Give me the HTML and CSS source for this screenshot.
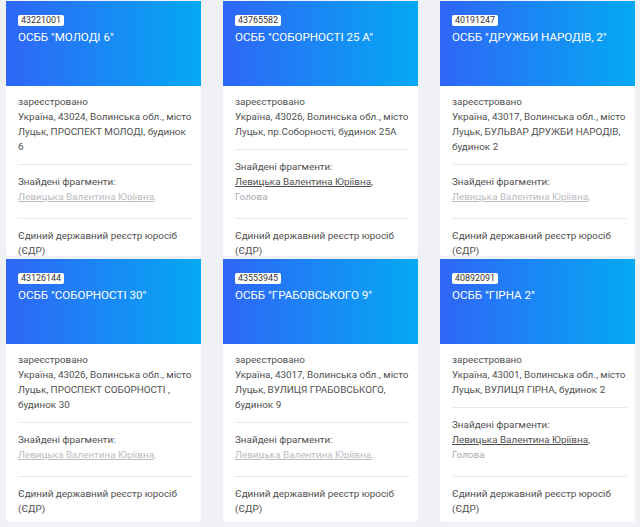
FILE: index.html
```html
<!DOCTYPE html>
<html>
  <head>
    <meta charset="utf-8">
    <title>ОСББ</title>
    <link rel="stylesheet" href="styles.css">
  </head>
  <body>
    <div class="results">
      <div class="card card-top">
        <div class="card-head">
          <span class="code">43221001</span>
          <div class="title">ОСББ "МОЛОДІ 6"</div>
        </div>
        <div class="section">
          <div>зареєстровано</div>
          <div>Україна, 43024, Волинська обл., місто Луцьк, ПРОСПЕКТ МОЛОДІ, будинок 6</div>
        </div>
        <div class="section fragments">
          <div>Знайдені фрагменти:</div>
          <div><a class="person dim">Левицька Валентина Юріївна</a><span class="dim">,</span></div>
        </div>
        <div class="section source">Єдиний державний реєстр юросіб (ЄДР)</div>
      </div>

      <div class="card card-top">
        <div class="card-head">
          <span class="code">43765582</span>
          <div class="title">ОСББ "СОБОРНОСТІ 25 А"</div>
        </div>
        <div class="section">
          <div>зареєстровано</div>
          <div>Україна, 43026, Волинська обл., місто Луцьк, пр.Соборності, будинок 25А</div>
        </div>
        <div class="section fragments">
          <div>Знайдені фрагменти:</div>
          <div><a class="person">Левицька Валентина Юріївна</a>,</div>
          <div class="role">Голова</div>
        </div>
        <div class="section source">Єдиний державний реєстр юросіб (ЄДР)</div>
      </div>

      <div class="card card-top">
        <div class="card-head">
          <span class="code">40191247</span>
          <div class="title">ОСББ "ДРУЖБИ НАРОДІВ, 2"</div>
        </div>
        <div class="section">
          <div>зареєстровано</div>
          <div>Україна, 43017, Волинська обл., місто Луцьк, БУЛЬВАР ДРУЖБИ НАРОДІВ, будинок 2</div>
        </div>
        <div class="section fragments">
          <div>Знайдені фрагменти:</div>
          <div><a class="person dim">Левицька Валентина Юріївна</a><span class="dim">,</span></div>
        </div>
        <div class="section source">Єдиний державний реєстр юросіб (ЄДР)</div>
      </div>

      <div class="card">
        <div class="card-head">
          <span class="code">43126144</span>
          <div class="title">ОСББ "СОБОРНОСТІ 30"</div>
        </div>
        <div class="section">
          <div>зареєстровано</div>
          <div>Україна, 43026, Волинська обл., місто Луцьк, ПРОСПЕКТ СОБОРНОСТІ , будинок 30</div>
        </div>
        <div class="section fragments">
          <div>Знайдені фрагменти:</div>
          <div><a class="person dim">Левицька Валентина Юріївна</a><span class="dim">,</span></div>
        </div>
        <div class="section source">Єдиний державний реєстр юросіб (ЄДР)</div>
      </div>

      <div class="card">
        <div class="card-head">
          <span class="code">43553945</span>
          <div class="title">ОСББ "ГРАБОВСЬКОГО 9"</div>
        </div>
        <div class="section">
          <div>зареєстровано</div>
          <div>Україна, 43017, Волинська обл., місто Луцьк, ВУЛИЦЯ ГРАБОВСЬКОГО, будинок 9</div>
        </div>
        <div class="section fragments">
          <div>Знайдені фрагменти:</div>
          <div><a class="person dim">Левицька Валентина Юріївна</a><span class="dim">,</span></div>
        </div>
        <div class="section source">Єдиний державний реєстр юросіб (ЄДР)</div>
      </div>

      <div class="card">
        <div class="card-head">
          <span class="code">40892091</span>
          <div class="title">ОСББ "ГІРНА 2"</div>
        </div>
        <div class="section">
          <div>зареєстровано</div>
          <div>Україна, 43001, Волинська обл., місто Луцьк, ВУЛИЦЯ ГІРНА, будинок 2</div>
        </div>
        <div class="section fragments">
          <div>Знайдені фрагменти:</div>
          <div><a class="person">Левицька Валентина Юріївна</a>,</div>
          <div class="role">Голова</div>
        </div>
        <div class="section source">Єдиний державний реєстр юросіб (ЄДР)</div>
      </div>
    </div>
  </body>
</html>
```

FILE: styles.css
```css
body {
  margin: 0;
  background-color: #eff1f4;
  font-family: Roboto, "Open Sans", Arial, sans-serif;
  color: #505050;
  font-size: 9.9px;
  line-height: 15px;
}
.results {
  display: grid;
  grid-template-columns: repeat(3, 195px);
  column-gap: 22px;
  row-gap: 3px;
  padding: 1px 0 0 6px;
  align-items: start;
}
.card {
  background-color: #ffffff;
  border-radius: 0 0 4px 4px;
  overflow: hidden;
}
.card-top {
  height: 255px;
}
.card-head {
  display: flex;
  flex-direction: column;
  align-items: flex-start;
  height: 85px;
  padding: 14px 12px 0;
  box-sizing: border-box;
  background: linear-gradient(to right, #2f66f6, #04a9f3);
  color: #ffffff;
}
.code {
  background-color: #ffffff;
  color: #333333;
  font-size: 8.9px;
  line-height: 11px;
  padding: 0 3px;
  border-radius: 2px;
}
.title {
  margin-top: 3px;
  font-size: 11.6px;
  line-height: 17px;
}
.section {
  margin: 0 8px 0 12px;
  padding: 9px 0 10px;
  border-top: 1px solid #e9eaec;
}
.card-head + .section {
  border-top: none;
  padding-top: 8px;
}
.fragments {
  padding-bottom: 14px;
}
.source {
  padding-bottom: 6px;
}
.person {
  color: #505050;
  text-decoration: underline;
}
.dim,
.person.dim {
  color: #b9bcc2;
}
.role {
  color: #a9acb2;
}
```
